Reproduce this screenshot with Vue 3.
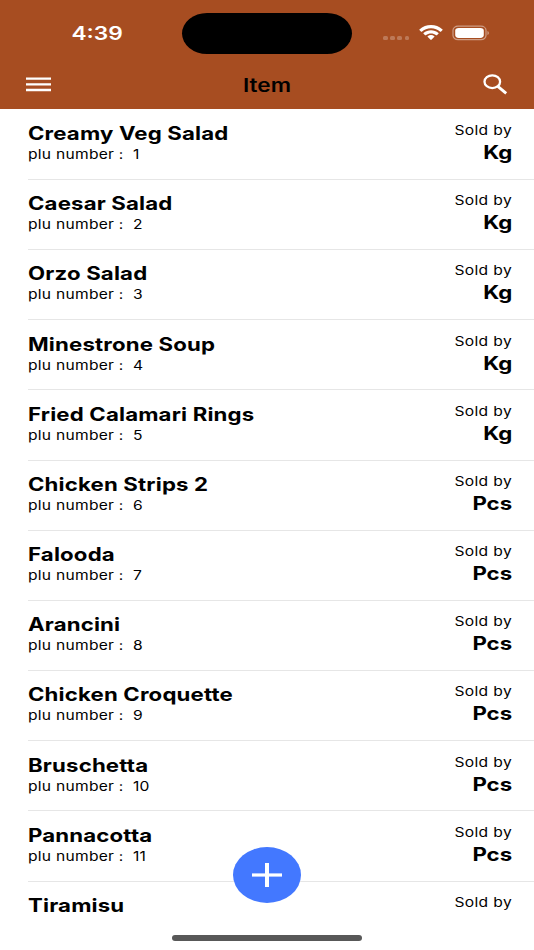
<template>
  <div class="screen">
    <header class="top">
      <div class="status">
        <span class="clock">4:39</span>
        <div class="island"></div>
        <div class="indicators">
          <div class="dots">
            <i v-for="n in 4" :key="n"></i>
          </div>
          <svg class="wifi" width="24" height="16" viewBox="0 0 17 12" preserveAspectRatio="none" fill="#fff">
            <path d="M8.5 2.4c2.5 0 4.8.9 6.5 2.6.1.1.3.1.5 0l1.2-1.2c.1-.2.1-.4 0-.5-4.6-4.4-11.8-4.4-16.4 0-.1.1-.1.3 0 .5L1.5 5c.1.1.3.1.5 0 1.7-1.7 4-2.6 6.5-2.6z" />
            <path d="M8.5 6.3c1.3 0 2.6.5 3.6 1.4.1.1.3.1.5 0l1.2-1.2c.1-.2.1-.4 0-.5-3-2.8-7.6-2.8-10.6 0-.1.1-.1.3 0 .5l1.2 1.2c.1.1.3.1.5 0 1-.9 2.3-1.4 3.6-1.4z" />
            <path d="M10.9 8.9c.1-.1.1-.3 0-.5-1.4-1.2-3.4-1.2-4.8 0-.1.2-.1.4 0 .5l2.1 2.2c.2.1.4.1.6 0z" />
          </svg>
          <svg class="battery" width="38" height="16" viewBox="0 0 38 16">
            <rect x="1" y="1.2" width="33" height="13.4" rx="5" ry="4" fill="none" stroke="#fff" stroke-opacity=".45" stroke-width="1.2" />
            <rect x="3.2" y="3" width="28.6" height="9.9" rx="3.5" ry="2.8" fill="#fff" />
            <path d="M35.5 5.9c1.8.7 1.8 3.3 0 4z" fill="#fff" fill-opacity=".5" />
          </svg>
        </div>
      </div>
      <div class="navbar">
        <button class="icon-btn menu" type="button" aria-label="Menu">
          <svg width="25" height="15" viewBox="0 0 25 15">
            <path d="M0 1.6h25M0 7.4h25M0 13h25" stroke="#fff" stroke-width="2.3" />
          </svg>
        </button>
        <h1 class="nav-title">Item</h1>
        <button class="icon-btn search" type="button" aria-label="Search">
          <svg width="25" height="21" viewBox="0 0 25 21" fill="none" stroke="#fff">
            <ellipse cx="9.3" cy="7.7" rx="7.8" ry="6.4" stroke-width="2.3" />
            <path d="M14.8 12.3l8.4 7" stroke-width="2.9" />
          </svg>
        </button>
      </div>
    </header>

    <ul class="list">
      <li v-for="item in items" :key="item.name" class="row">
        <div class="info">
          <span class="name">{{ item.name }}</span>
          <span v-if="item.plu" class="plu">plu number :&nbsp; {{ item.plu }}</span>
        </div>
        <div class="sold">
          <span class="sold-label">Sold by</span>
          <span v-if="item.unit" class="unit">{{ item.unit }}</span>
        </div>
      </li>
    </ul>

    <button class="fab" type="button" aria-label="Add item">
      <svg width="30" height="24" viewBox="0 0 30 24">
        <path d="M0 12h30" stroke="#fff" stroke-width="3.2" />
        <path d="M15 0v24" stroke="#fff" stroke-width="4" />
      </svg>
    </button>
    <footer class="bottom">
      <div class="home-bar"></div>
    </footer>
  </div>
</template>

<script setup>
import { ref } from "vue";

const items = ref([
  { plu: 1, name: "Creamy Veg Salad", unit: "Kg" },
  { plu: 2, name: "Caesar Salad", unit: "Kg" },
  { plu: 3, name: "Orzo Salad", unit: "Kg" },
  { plu: 4, name: "Minestrone Soup", unit: "Kg" },
  { plu: 5, name: "Fried Calamari Rings", unit: "Kg" },
  { plu: 6, name: "Chicken Strips 2", unit: "Pcs" },
  { plu: 7, name: "Falooda", unit: "Pcs" },
  { plu: 8, name: "Arancini", unit: "Pcs" },
  { plu: 9, name: "Chicken Croquette", unit: "Pcs" },
  { plu: 10, name: "Bruschetta", unit: "Pcs" },
  { plu: 11, name: "Pannacotta", unit: "Pcs" },
  { name: "Tiramisu" }
]);
</script>

<style>
body {
  margin: 0;
  background: #fff;
}
</style>

<style scoped>
.screen {
  position: relative;
  display: flex;
  flex-direction: column;
  width: 534px;
  height: 950px;
  overflow: hidden;
  background: #fff;
  color: #000;
  font-family: Inter, "Liberation Sans", sans-serif;
}

.top {
  flex: none;
  height: 109px;
  background: #a74d21;
}

.status {
  display: grid;
  grid-template-columns: 182px 170px 1fr;
  height: 60px;
}

.clock {
  justify-self: end;
  margin: 20px 59px 0 0;
  color: #fff;
  font-size: 18.5px;
  font-weight: 600;
  line-height: 26px;
  transform: scaleX(1.23);
  transform-origin: right;
}

.island {
  height: 41px;
  margin-top: 13px;
  border-radius: 25px / 20.5px;
  background: #000;
}

.indicators {
  display: flex;
  align-items: flex-start;
  padding: 25px 0 0 31px;
}

.dots {
  display: flex;
  gap: 2.4px;
  margin: 11px 9.5px 0 0;
}

.dots i {
  width: 4.8px;
  height: 4px;
  border-radius: 1.5px;
  background: rgba(255, 255, 255, 0.25);
}

.battery {
  margin-left: 9px;
}

.navbar {
  display: grid;
  grid-template-columns: 100px 1fr 100px;
  align-items: center;
  height: 49px;
}

.icon-btn {
  display: flex;
  padding: 0;
  border: none;
  background: transparent;
}

.menu {
  margin-left: 26px;
}

.search {
  justify-self: end;
  margin-right: 26px;
}

.nav-title {
  margin: 0;
  font-size: 18.5px;
  font-weight: 600;
  text-align: center;
  transform: scaleX(1.22);
}

.list {
  flex: 1;
  min-height: 0;
  margin: 0;
  padding: 0.6px 0 0 28px;
  overflow: hidden;
  list-style: none;
}

.row {
  display: flex;
  justify-content: space-between;
  box-sizing: border-box;
  height: 70.2px;
  padding: 11.4px 22px 0 0;
  border-bottom: 1px solid #e6e6e6;
}

.row:last-child {
  border-bottom: none;
}

.info,
.sold {
  display: flex;
  flex-direction: column;
  white-space: nowrap;
}

.info span {
  transform: scaleX(1.2);
  transform-origin: left;
}

.sold {
  align-items: flex-end;
}

.sold span {
  transform: scaleX(1.2);
  transform-origin: right;
}

.name {
  font-size: 18.5px;
  font-weight: 700;
  line-height: 24px;
  letter-spacing: 0.14px;
}

.info .plu {
  margin-left: -0.5px;
  font-size: 13px;
  line-height: 18.4px;
  letter-spacing: 0.22px;
}

.sold-label {
  font-size: 13px;
  line-height: 18px;
  letter-spacing: 0.3px;
}

.unit {
  font-size: 18.5px;
  font-weight: 700;
  line-height: 27px;
}

.bottom {
  display: flex;
  flex: none;
  justify-content: center;
  height: 34px;
  background: #fff;
}

.home-bar {
  width: 190px;
  height: 5.5px;
  margin-top: 19px;
  border-radius: 3px;
  background: #585858;
}

/* floats over the list */
.fab {
  position: absolute;
  left: 233px;
  top: 847px;
  display: flex;
  align-items: center;
  justify-content: center;
  width: 68px;
  height: 56px;
  padding: 0;
  border: none;
  border-radius: 50%;
  background: #4378ff;
}
</style>
